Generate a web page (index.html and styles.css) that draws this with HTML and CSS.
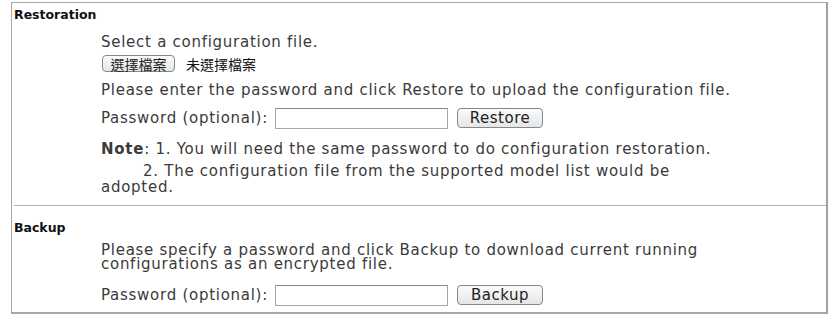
FILE: index.html
```html
<!DOCTYPE html>
<html>
<head>
<meta charset="utf-8">
<link rel="stylesheet" href="styles.css">
</head>
<body>
<div class="panel">
  <section class="section restore">
    <div class="title">Restoration</div>
    <div class="content">
      <div class="row r-select">Select a configuration file.</div>
      <div class="row r-file"><span class="btn file-btn">選擇檔案</span><span class="nofile">未選擇檔案</span></div>
      <div class="row r-please">Please enter the password and click Restore to upload the configuration file.</div>
      <div class="row r-pass"><span class="label">Password (optional):</span><span class="input"></span><span class="btn action">Restore</span></div>
      <div class="row r-note"><b>Note</b>: 1. You will need the same password to do configuration restoration.</div>
      <div class="row r-note2"><span class="indent"></span>2. The configuration file from the supported model list would be adopted.</div>
    </div>
  </section>
  <section class="section backup">
    <div class="title">Backup</div>
    <div class="content">
      <div class="row r-spec">Please specify a password and click Backup to download current running configurations as an encrypted file.</div>
      <div class="row r-pass2"><span class="label">Password (optional):</span><span class="input"></span><span class="btn action">Backup</span></div>
    </div>
  </section>
</div>
</body>
</html>
```

FILE: styles.css
```css
html, body { margin: 0; background: #fff; }
body {
  padding: 2px 0 0 11px;
  font-family: "DejaVu Sans", Verdana, sans-serif;
  color: #3a3a3a;
}
.panel {
  width: 817px;
  height: 312px;
  box-sizing: border-box;
  border: 1px solid #a8a8a8;
  border-right: 2px solid #a0a0a0;
  border-bottom: 2px solid #a8a8a8;
  padding: 0 0 0 2px;
}
.section { display: flex; flex-direction: column; }
.title {
  font-family: "DejaVu Sans", sans-serif;
  font-weight: bold;
  font-size: 12.5px;
  line-height: 16px;
  height: 16px;
  color: #111;
  letter-spacing: 0;
}
.restore .title { padding-top: 4px; }
.restore { border-bottom: 1px solid #b0b0b0; height: 203px; box-sizing: border-box; }
.backup .title { padding-top: 14px; }
.content {
  padding-left: 87px;
  width: 631px;
  font-size: 15px;
  letter-spacing: 0.73px;
  line-height: 16px;
}
.row { display: flex; align-items: center; white-space: nowrap; }
.r-select { margin-top: 11px; height: 16px; }
.r-file { margin-top: 5px; height: 17px; }
.r-please { margin-top: 10px; height: 16px; }
.r-pass { margin-top: 9px; height: 22px; }
.r-note { margin-top: 12px; height: 16px; }
.r-note2 { display: block; white-space: normal; margin-top: 6px; }
.r-note2 .indent { display: inline-block; width: 42px; }
.r-spec { display: block; white-space: normal; margin-top: 7px; line-height: 14px; }
.r-pass2 { margin-top: 13px; height: 22px; }
.btn {
  display: inline-flex;
  align-items: center;
  justify-content: center;
  box-sizing: border-box;
  border: 1px solid #7d8a8e;
  border-radius: 4px;
  background: linear-gradient(#fbfbfb, #e6e6e6);
  color: #222;
}
.file-btn {
  font-family: "Noto Sans CJK TC", sans-serif;
  font-size: 14px;
  letter-spacing: 0;
  height: 17px;
  width: 73px;
  margin-left: 1px;
}
.nofile {
  font-family: "Noto Sans CJK TC", sans-serif;
  font-size: 14px;
  letter-spacing: 0;
  margin-left: 11px;
  color: #111;
}
.label { width: 174px; overflow: hidden; }
.input {
  display: inline-block;
  box-sizing: border-box;
  width: 173px;
  height: 21px;
  border: 1px solid #a6a6a6;
  border-top-color: #8a8a8a;
  background: #fff;
}
.action {
  margin-left: 9px;
  width: 86px;
  height: 20px;
  font-size: 15px;
  letter-spacing: 0.5px;
}
```
